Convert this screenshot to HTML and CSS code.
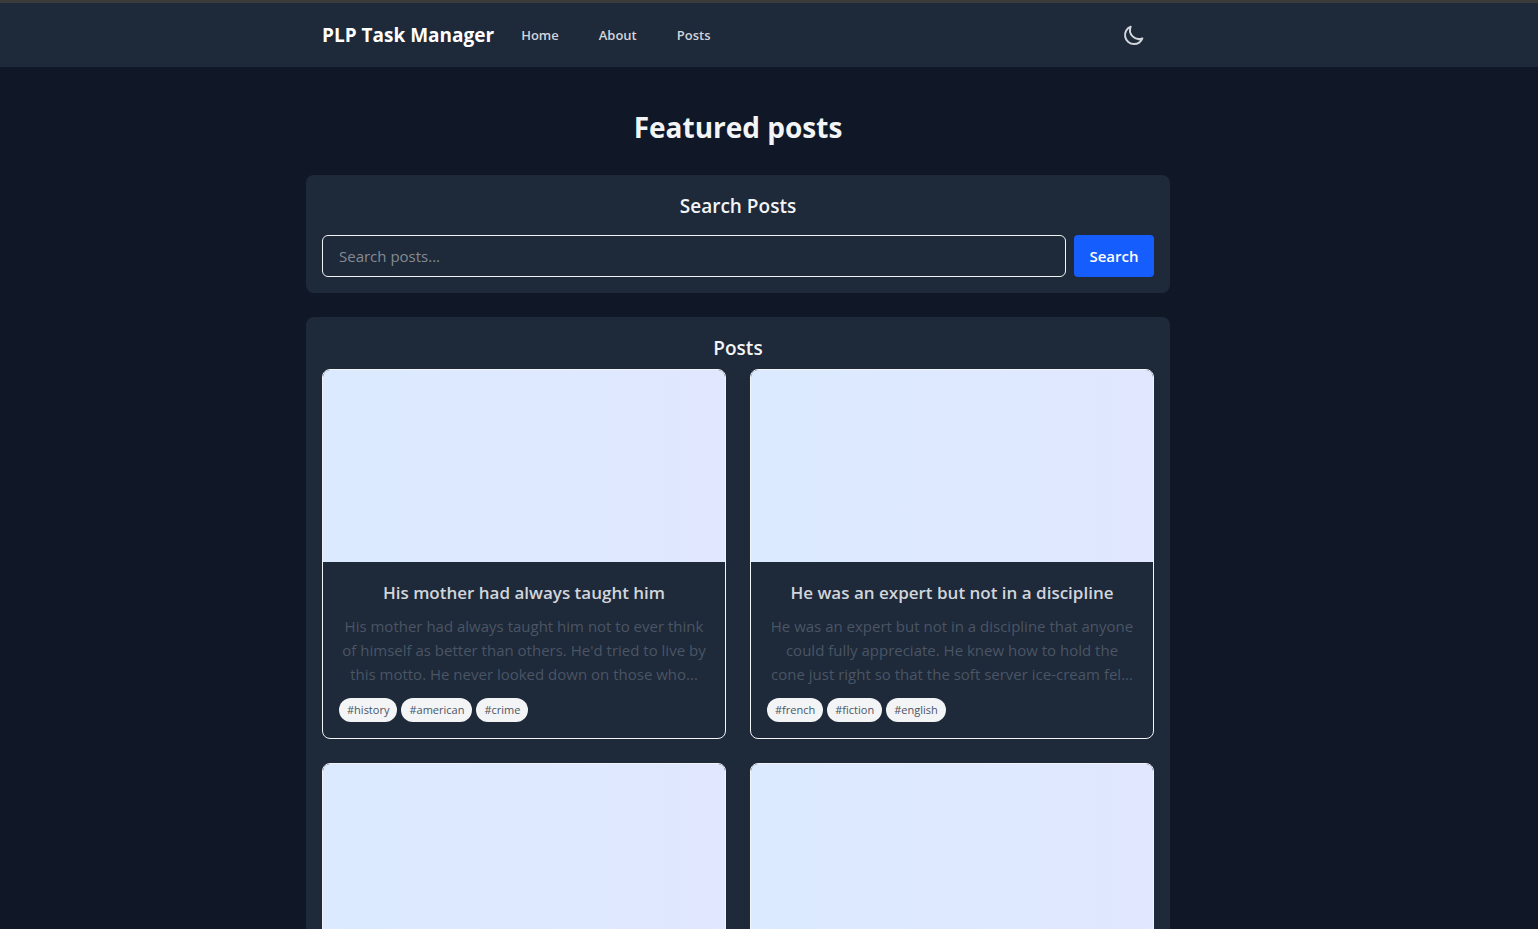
FILE: index.html
```html
<!DOCTYPE html>
<html lang="en">
<head>
<meta charset="utf-8">
<meta name="viewport" content="width=device-width, initial-scale=1">
<title>PLP Task Manager</title>
<link rel="stylesheet" href="styles.css">
</head>
<body>
<header class="site-header">
  <div class="container navbar">
    <a class="brand" href="#">PLP Task Manager</a>
    <nav class="nav-links">
      <a href="#">Home</a>
      <a href="#">About</a>
      <a href="#">Posts</a>
    </nav>
    <button class="theme-toggle" type="button" aria-label="Toggle dark mode">
      <svg viewBox="0 0 24 24" width="24" height="24" fill="none" stroke="currentColor" stroke-width="2" stroke-linecap="round" stroke-linejoin="round"><path d="M20.354 15.354A9 9 0 0 1 8.646 3.646 9.003 9.003 0 0 0 12 21a9.003 9.003 0 0 0 8.354-5.646z"/></svg>
    </button>
  </div>
</header>
<main class="container page">
  <h1 class="page-title">Featured posts</h1>
  <section class="panel search-panel">
    <h2 class="panel-title">Search Posts</h2>
    <form class="search-form">
      <input class="search-input" type="text" placeholder="Search posts..." aria-label="Search posts">
      <button class="search-button" type="submit">Search</button>
    </form>
  </section>
  <section class="panel posts-panel">
    <h2 class="panel-title">Posts</h2>
    <div class="post-grid">
      <article class="post">
        <div class="post-cover"></div>
        <div class="post-body">
          <h3 class="post-title">His mother had always taught him</h3>
          <p class="post-text">His mother had always taught him not to ever think<br>of himself as better than others. He'd tried to live by<br>this motto. He never looked down on those who...</p>
          <div class="tags"><span class="tag">#history</span><span class="tag">#american</span><span class="tag">#crime</span></div>
        </div>
      </article>
      <article class="post">
        <div class="post-cover"></div>
        <div class="post-body">
          <h3 class="post-title">He was an expert but not in a discipline</h3>
          <p class="post-text">He was an expert but not in a discipline that anyone<br>could fully appreciate. He knew how to hold the<br>cone just right so that the soft server ice-cream fel...</p>
          <div class="tags"><span class="tag">#french</span><span class="tag">#fiction</span><span class="tag">#english</span></div>
        </div>
      </article>
      <article class="post"><div class="post-cover"></div></article>
      <article class="post"><div class="post-cover"></div></article>
    </div>
  </section>
</main>
</body>
</html>
```
FILE: styles.css
```css
:root {
  --gutter: 62px;
  --surface: #1e2939;
  --light: #f3f4f6;
}

*, *::before, *::after {
  box-sizing: border-box;
}

html {
  background: #101828;
}

body {
  margin: 0;
  padding: 0;
  color: var(--light);
  font-family: "Segoe UI", "Open Sans", "Noto Sans", sans-serif;
  font-size: 15px;
  line-height: 24px;
}

h1, h2, h3, p {
  margin: 0;
}

a {
  color: inherit;
  text-decoration: none;
}

button, input {
  font: inherit;
  color: inherit;
}

.site-header {
  padding-right: var(--gutter);
  border-top: 3px solid #3b3b3b;
  background: var(--surface);
}

.container {
  max-width: 896px;
  margin: 0 auto;
  padding: 0 16px;
}

.navbar {
  display: flex;
  align-items: center;
  height: 64px;
  padding: 0 32px;
}

.brand {
  color: #fff;
  font-size: 19px;
  font-weight: 700;
}

.nav-links {
  display: flex;
  gap: 40px;
  margin-left: 27px;
  color: #d1d5dc;
  font-size: 13px;
  font-weight: 600;
}

.theme-toggle {
  display: flex;
  margin-left: auto;
  padding: 8px;
  border: 0;
  background: none;
  color: #d1d5dc;
}

.page {
  width: calc(100% - var(--gutter));
  max-width: 896px;
  margin-left: max(0px, calc((100% - var(--gutter) - 896px) / 2));
  padding-top: 42px;
}

.page-title {
  margin-bottom: 30px;
  font-size: 28px;
  font-weight: 700;
  line-height: 36px;
  text-align: center;
}

.panel {
  margin-bottom: 24px;
  padding: 16px;
  border-radius: 8px;
  background: var(--surface);
}

.posts-panel {
  margin-bottom: 0;
}

.panel-title {
  margin-bottom: 6px;
  font-size: 19px;
  font-weight: 600;
  line-height: 30px;
  text-align: center;
}

.search-panel .panel-title {
  margin-bottom: 14px;
}

.search-form {
  display: flex;
  gap: 8px;
}

.search-input {
  flex: 1;
  min-width: 0;
  height: 42px;
  padding: 0 16px;
  border: 1px solid var(--light);
  border-radius: 6px;
  background: transparent;
}

.search-input::placeholder {
  color: #848b93;
  opacity: 1;
}

.search-button {
  width: 80px;
  padding: 0;
  border: 0;
  border-radius: 4px;
  background: #155dfc;
  color: #fff;
  font-weight: 600;
}

.post-grid {
  display: grid;
  grid-template-columns: repeat(auto-fit, minmax(320px, 1fr));
  gap: 24px;
}

.post {
  overflow: hidden;
  border: 1px solid var(--light);
  border-radius: 8px;
}

.post-cover {
  height: 192px;
  background: linear-gradient(to right, #dbeafe, #e0e7ff);
}

.post-body {
  padding: 16px;
}

.post-title {
  margin-bottom: 6px;
  color: #d1d5dc;
  font-size: 17px;
  font-weight: 600;
  line-height: 30px;
  text-align: center;
}

.post-text {
  margin-bottom: 12px;
  color: #4a5565;
  text-align: center;
}

.tags {
  display: flex;
  flex-wrap: wrap;
  gap: 4px;
}

.tag {
  padding: 4px 8px;
  border-radius: 12px;
  background: var(--light);
  color: #4a5565;
  font-size: 11px;
  line-height: 16px;
}
```
